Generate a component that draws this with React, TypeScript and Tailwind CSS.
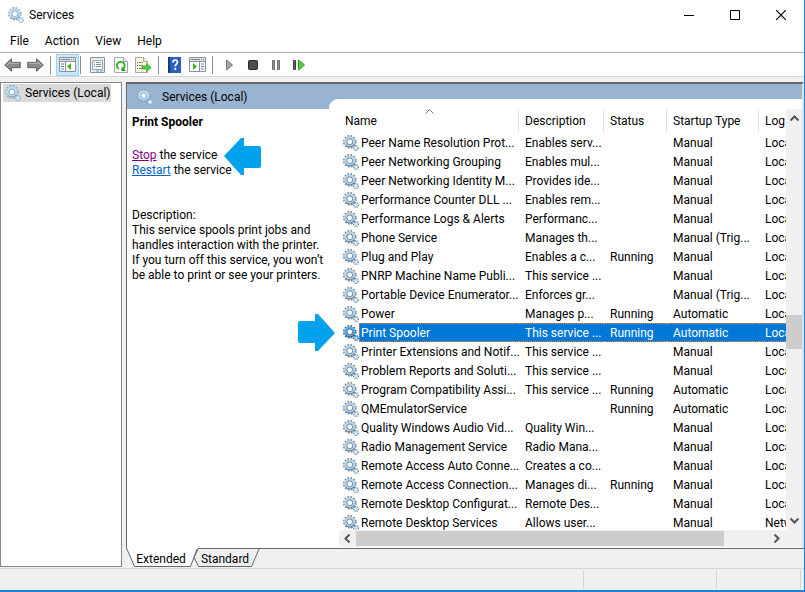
import React from "react";

type Service = [name: string, description: string, status: string, startup: string, logOn: string];

const SERVICES: Service[] = [
  ["Peer Name Resolution Prot...", "Enables serv...", "", "Manual", "Local Service"],
  ["Peer Networking Grouping", "Enables mul...", "", "Manual", "Local Service"],
  ["Peer Networking Identity M...", "Provides ide...", "", "Manual", "Local Service"],
  ["Performance Counter DLL ...", "Enables rem...", "", "Manual", "Local Service"],
  ["Performance Logs & Alerts", "Performanc...", "", "Manual", "Local Service"],
  ["Phone Service", "Manages th...", "", "Manual (Trig...", "Local Service"],
  ["Plug and Play", "Enables a c...", "Running", "Manual", "Local System"],
  ["PNRP Machine Name Publi...", "This service ...", "", "Manual", "Local Service"],
  ["Portable Device Enumerator...", "Enforces gr...", "", "Manual (Trig...", "Local System"],
  ["Power", "Manages p...", "Running", "Automatic", "Local System"],
  ["Print Spooler", "This service ...", "Running", "Automatic", "Local System"],
  ["Printer Extensions and Notif...", "This service ...", "", "Manual", "Local System"],
  ["Problem Reports and Soluti...", "This service ...", "", "Manual", "Local System"],
  ["Program Compatibility Assi...", "This service ...", "Running", "Automatic", "Local System"],
  ["QMEmulatorService", "", "Running", "Automatic", "Local System"],
  ["Quality Windows Audio Vid...", "Quality Win...", "", "Manual", "Local Service"],
  ["Radio Management Service", "Radio Mana...", "", "Manual", "Local Service"],
  ["Remote Access Auto Conne...", "Creates a co...", "", "Manual", "Local System"],
  ["Remote Access Connection...", "Manages di...", "Running", "Manual", "Local System"],
  ["Remote Desktop Configurat...", "Remote Des...", "", "Manual", "Local System"],
  ["Remote Desktop Services", "Allows user...", "", "Manual", "Network Service"],
];

const SELECTED = "Print Spooler";

const Gears = ({ tone = "normal" }: { tone?: "normal" | "soft" | "active" }) => {
  const [edge, body] = {
    normal: ["#5f7f98", "#b5d2e6"],
    soft: ["#7fa6c1", "#b9dcf0"],
    active: ["#1f5f93", "#6ba9d6"],
  }[tone];
  return (
    <svg width="16" height="16" viewBox="0 0 16 16" fill="none" className="shrink-0">
      <circle cx="6.800" cy="6.800" r="6" stroke={edge} strokeWidth="1.600" strokeDasharray="1.700 1.442" />
      <circle cx="6.800" cy="6.800" r="4.300" stroke={body} strokeWidth="2.600" />
      <path d="M11.500 8.800A5.100 5.100 0 0 1 2.700 9.900" stroke={edge} strokeWidth="1" />
      <circle cx="6.800" cy="6.800" r="2.900" fill="#fff" stroke={edge} strokeWidth="0.900" />
      <circle cx="13" cy="13" r="2.400" stroke={edge} strokeWidth="1.300" strokeDasharray="1 0.885" />
      <circle cx="13" cy="13" r="1.500" fill="#fff" stroke={body} strokeWidth="1.300" />
    </svg>
  );
};

const BigArrow = ({ className }: { className: string }) => (
  <svg width="37" height="37" viewBox="0 0 37 37" className={className}>
    <path d="M0 18 17 0h3v8h15q2 0 2 2v18q0 2-2 2H20v7h-3z" fill="#00a2ed" />
  </svg>
);

const Chevron = ({ d }: { d: string }) => (
  <svg width="9" height="9" viewBox="0 0 9 9" fill="none" stroke="#555" strokeWidth="2">
    <path d={d} />
  </svg>
);

const NavArrow = ({ flip = false }: { flip?: boolean }) => (
  <svg width="17" height="14" viewBox="0 0 17 14" className={flip ? "-scale-x-100" : ""}>
    <path d="M.7 7 7.5.8v3.5h8.7v5.4H7.5v3.5z" fill="#8c8c8c" stroke="#5e5e5e" />
    <path d="M3 7 6.5 4v1.3h8.6" fill="none" stroke="#b9b9b9" />
  </svg>
);

const PaneIcon = ({ right = false }: { right?: boolean }) => (
  <svg width="17" height="15" viewBox="0 0 17 15">
    <path d="M.5.5h16v14H.5z" fill="#fff" stroke="#8a929a" />
    <path d="M1 1h15v3H1z" fill="#dfe3e7" />
    <path d="M2 2.5h9M12 2.5h1M14 2.5h1" stroke="#7f878f" />
    <path d="M1 4.5h15" stroke="#8a929a" />
    {right ? (
      <>
        <path d="M10.5 5v9" stroke="#8a929a" />
        <path d="M4 6v7l4-3.500z" fill="#35b51a" />
        <path d="M12 7h3M12 9.500h3M12 12h3" stroke="#5187bd" />
      </>
    ) : (
      <>
        <path d="M6.5 5v9" stroke="#8a929a" />
        <path d="M12 6v7L8 9.500z" fill="#35b51a" />
        <path d="M2 7h3M2 9.500h3M2 12h3" stroke="#5187bd" />
      </>
    )}
  </svg>
);

const PropertiesIcon = () => (
  <svg width="15" height="16" viewBox="0 0 15 16">
    <path d="M.5.5h14v15H.5z" fill="#e8ebee" stroke="#8a929a" />
    <path d="M2.500 3.500h10v9h-10z" fill="#fff" stroke="#9aa5ae" />
    <path d="M4 5.500h1M4 7.500h1M4 9.500h1" stroke="#4c87c1" />
    <path d="M6 5.500h5M6 7.500h5M6 9.500h5" stroke="#8393a0" />
    <path d="M6 14h3M10 14h3" stroke="#55aee5" />
  </svg>
);

const RefreshIcon = () => (
  <svg width="14" height="16" viewBox="0 0 14 16">
    <path d="M.5.5h9l4 4v11H.5z" fill="#fff" stroke="#a3a9ad" />
    <path d="M9.500.5v4h4" fill="#e9ecee" stroke="#a3a9ad" />
    <path d="M4.900 12A3.900 3.900 0 1 1 9 11.800" fill="none" stroke="#39b52a" strokeWidth="2" />
    <path d="M7.500 9.500v4.500h4.500z" fill="#249b19" />
  </svg>
);

const ExportIcon = () => (
  <svg width="17" height="16" viewBox="0 0 17 16">
    <path d="M.5.5h8l4 4v11H.5z" fill="#fffbe5" stroke="#aaa797" />
    <path d="M8.500.5v4h4" fill="#f1eddb" stroke="#aaa797" />
    <path d="M2 5.500h1M2 8.500h1M2 11.500h1" stroke="#555" />
    <path d="M4 5.500h4M4 8.500h4M4 11.500h4" stroke="#8d8871" />
    <path d="M7 9h4.500V6.300L16.200 10.500 11.500 14.700V12H7z" fill="#56c83c" stroke="#37a526" strokeWidth=".7" />
  </svg>
);

const HelpIcon = () => (
  <svg width="13" height="16" viewBox="0 0 13 16">
    <path d="M0 0h13v16H0z" fill="#2d5fbe" />
    <path d="M0 0h2v16H0z" fill="#17377f" />
    <path d="M5 5.500q0-2.500 2.200-2.500t2.200 2.200c0 1.900-2.200 1.800-2.200 4.300" fill="none" stroke="#fff" strokeWidth="1.700" />
    <path d="M6.300 11h1.900v2H6.300z" fill="#fff" />
  </svg>
);

const ToolSeparator = () => <div className="h-[18px] w-px bg-[#8a8d91]" />;

const Tool = ({ label, className = "", children }: { label: string; className?: string; children: React.ReactNode }) => (
  <button type="button" aria-label={label} className={`flex h-[22px] w-[23px] items-center justify-center ${className}`}>
    {children}
  </button>
);

const Toolbar = () => (
  <div role="toolbar" className="flex h-[24px] shrink-0 items-center border-b border-[#d7d7d7] bg-white pl-px">
    <Tool label="Back"><NavArrow /></Tool>
    <Tool label="Forward"><NavArrow flip /></Tool>
    <div className="ml-[3px]"><ToolSeparator /></div>
    <Tool label="Show/Hide Console Tree" className="ml-[5px] border border-[#99d1ff] bg-[#cce8ff]"><PaneIcon /></Tool>
    <div className="mr-[2px] ml-px"><ToolSeparator /></div>
    <Tool label="Properties" className="ml-[3px]"><PropertiesIcon /></Tool>
    <Tool label="Refresh"><RefreshIcon /></Tool>
    <Tool label="Export List"><ExportIcon /></Tool>
    <div className="mr-[4px] ml-[3px]"><ToolSeparator /></div>
    <Tool label="Help"><HelpIcon /></Tool>
    <Tool label="Show/Hide Action Pane"><PaneIcon right /></Tool>
    <div className="mr-[5px] ml-[3px]"><ToolSeparator /></div>
    <Tool label="Start Service">
      <svg width="7" height="12" viewBox="0 0 7 12"><path d="M.5 1v10l6-5z" fill="#a9a9ad" stroke="#77777b" /></svg>
    </Tool>
    <Tool label="Stop Service">
      <svg width="10" height="10" viewBox="0 0 10 10"><rect x=".5" y=".5" width="9" height="9" rx="1" fill="#4b4b4d" stroke="#29292b" /></svg>
    </Tool>
    <Tool label="Pause Service">
      <svg width="8" height="10" viewBox="0 0 8 10"><path d="M.5.5h2v9h-2zM5.500.5h2v9h-2z" fill="#929296" stroke="#6d6d71" /></svg>
    </Tool>
    <Tool label="Restart Service">
      <svg width="12" height="12" viewBox="0 0 12 12">
        <path d="M.5 1.500h2v9h-2z" fill="#666" stroke="#3e3e40" />
        <path d="M5.500 1v10l6-5z" fill="#4ed03a" stroke="#2ba81c" />
      </svg>
    </Tool>
  </div>
);

const TitleBar = () => (
  <header className="flex h-[29px] shrink-0 items-center bg-white pl-2">
    <Gears tone="soft" />
    <h1 className="ml-[5px] flex-1">Services</h1>
    <button type="button" aria-label="Minimize" className="flex h-7 w-[46px] items-center justify-center">
      <svg width="10" height="10" viewBox="0 0 10 10"><path d="M0 5.500h10" stroke="#000" /></svg>
    </button>
    <button type="button" aria-label="Maximize" className="flex h-7 w-[46px] items-center justify-center">
      <svg width="10" height="10" viewBox="0 0 10 10"><path d="M.5.5h9v9h-9z" fill="none" stroke="#000" /></svg>
    </button>
    <button type="button" aria-label="Close" className="flex h-7 w-[46px] items-center justify-center">
      <svg width="10" height="10" viewBox="0 0 10 10"><path d="m0 0 10 10M10 0 0 10" stroke="#000" strokeWidth="1.200" /></svg>
    </button>
  </header>
);

const Details = () => (
  <section className="w-[202px] shrink-0 px-[5px] pt-[6px] leading-[15px]">
    <h2 className="font-bold">Print Spooler</h2>
    <p className="mt-[18px]"><a href="#stop" className="text-[#800080] underline">Stop</a> the service</p>
    <p><a href="#restart" className="text-[#0066cc] underline">Restart</a> the service</p>
    <p className="mt-[30px]">Description:</p>
    <p className="whitespace-nowrap">
      This service spools print jobs and<br />
      handles interaction with the printer.<br />
      If you turn off this service, you won’t<br />
      be able to print or see your printers.
    </p>
  </section>
);

const ServiceTable = () => (
  <div className="min-h-0 min-w-0 flex-1 overflow-hidden">
    <table className="w-[540px] table-fixed border-separate border-spacing-0 text-left whitespace-nowrap">
      <colgroup>
        <col className="w-[180px]" />
        <col className="w-[85px]" />
        <col className="w-[63px]" />
        <col className="w-[92px]" />
        <col />
      </colgroup>
      <thead>
        <tr className="h-6">
          <th className="relative border-r border-[#e3e3e3] p-0 pl-[6px] font-normal">
            Name
            <svg width="9" height="5" viewBox="0 0 9 5" className="absolute top-0 left-[86px]">
              <path d="M.5 4.500l4-4 4 4" fill="none" stroke="#777" />
            </svg>
          </th>
          <th className="border-r border-[#e3e3e3] p-0 pl-[6px] font-normal">Description</th>
          <th className="border-r border-[#e3e3e3] p-0 pl-[6px] font-normal">Status</th>
          <th className="border-r border-[#e3e3e3] p-0 pl-[6px] font-normal">Startup Type</th>
          <th className="p-0 pl-[6px] font-normal">Log On As</th>
        </tr>
      </thead>
      <tbody>
        {SERVICES.map(([name, ...rest]) => {
          const selected = name === SELECTED;
          return (
            <tr key={name} className="h-[19px]">
              <td className="p-0">
                <div className="flex h-[19px] items-center pl-[4px]">
                  <Gears tone={selected ? "active" : "normal"} />
                  <span
                    className={
                      selected
                        ? "flex h-[19px] flex-1 items-center border-y border-l border-dotted border-[#ff8728] bg-[#0078d7] pl-px text-white"
                        : "pl-[2px]"
                    }
                  >
                    {name}
                  </span>
                </div>
              </td>
              {rest.map((text, i) => (
                <td key={i} className="p-0">
                  <div
                    className={
                      selected
                        ? "flex h-[19px] items-center border-y border-dotted border-[#ff8728] bg-[#0078d7] pl-[6px] text-white"
                        : "flex h-[19px] items-center pl-[6px]"
                    }
                  >
                    {text}
                  </div>
                </td>
              ))}
            </tr>
          );
        })}
      </tbody>
    </table>
  </div>
);

const Tabs = () => (
  <div role="tablist" className="flex h-[19px] shrink-0">
    <button type="button" role="tab" aria-selected="true" className="relative h-[19px] w-[68px] pt-[2px]">
      <svg width="75" height="19" viewBox="0 0 75 19" className="absolute top-0 left-0">
        <path d="M0 0 8.500 18.500h56L72 0z" fill="#fff" />
        <path d="M.5 0 8.500 18.500h56L71 1" fill="none" stroke="#666" />
      </svg>
      <span className="relative pl-[2px]">Extended</span>
    </button>
    <button type="button" role="tab" aria-selected="false" className="relative h-[19px] w-[64px] pt-[2px]">
      <svg width="66" height="19" viewBox="0 0 66 19" className="absolute top-0 left-0">
        <path d="M4 1 0 9.500 4.500 18.500h53L65 1" fill="none" stroke="#666" />
      </svg>
      <span className="relative pr-[2px]">Standard</span>
    </button>
    <div className="-ml-[61px] flex-1 border-t border-[#666]" />
  </div>
);

export default function App() {
  return (
    <div className="flex h-screen flex-col overflow-hidden border-r border-b-2 border-[#1883d7] bg-[#f0f0f0] font-['Roboto','Open_Sans',sans-serif] text-[12px] leading-4 text-black">
      <TitleBar />
      <nav className="flex h-[24px] shrink-0 items-center gap-4 border-b border-[#b0b0b0] bg-white pl-[10px]">
        <button type="button">File</button>
        <button type="button">Action</button>
        <button type="button">View</button>
        <button type="button">Help</button>
      </nav>
      <Toolbar />

      <div className="flex min-h-0 flex-1 gap-1 pt-[5px]">
        <aside className="w-[122px] shrink-0 border border-[#828790] bg-white">
          <div className="mt-px ml-[2px] flex h-[18px] w-[108px] items-center bg-[#d9d9d9] pl-[2px] whitespace-nowrap">
            <Gears tone="soft" />
            <span className="ml-[4px]">Services (Local)</span>
          </div>
        </aside>

        <div className="flex min-w-0 flex-1 flex-col">
          <main className="relative flex min-h-0 flex-1 flex-col border-t-2 border-r-2 border-l border-[#696969] border-r-[#e3e3e3] bg-[#99b4d1]">
            <div className="-mb-[10px] flex h-[25px] shrink-0 items-center pl-[10px]">
              <Gears tone="soft" />
              <h2 className="ml-[9px]">Services (Local)</h2>
            </div>
            <div className="flex min-h-0 flex-1">
              <div className="mt-[10px] flex bg-white"><Details /></div>
              <div className="flex min-h-0 min-w-0 flex-1 flex-col rounded-tl-[9px] bg-white pt-[10px] pl-[10px]">
                <div className="flex min-h-0 flex-1">
                  <ServiceTable />
                  <div className="flex w-4 shrink-0 flex-col items-center justify-between bg-[#f0f0f0] py-[5px]">
                    <Chevron d="M.5 6.500l4-4 4 4" />
                    <div className="mt-[192px] h-[34px] w-4 bg-[#cdcdcd]" />
                    <div className="flex-1" />
                    <Chevron d="M.5 2.500l4 4 4-4" />
                  </div>
                </div>
                <div className="mb-px flex h-[17px] shrink-0 items-center bg-[#f0f0f0] pr-[21px] pl-1">
                  <Chevron d="M6.500.5l-4 4 4 4" />
                  <div className="mr-auto ml-1 h-[15px] w-[84%] bg-[#cdcdcd]" />
                  <Chevron d="M2.500.5l4 4-4 4" />
                </div>
              </div>
            </div>
            <BigArrow className="absolute top-[54px] left-[97px]" />
            <BigArrow className="absolute top-[230px] left-[171px] rotate-180" />
          </main>
          <Tabs />
        </div>
      </div>

      <footer className="mt-px flex h-[22px] shrink-0 justify-end border-t border-[#d7d7d7] py-px">
        <div className="w-[133px] border-l border-[#d7d7d7]" />
        <div className="w-[85px] border-x border-[#d7d7d7]" />
        <div className="w-[3px]" />
      </footer>
    </div>
  );
}
